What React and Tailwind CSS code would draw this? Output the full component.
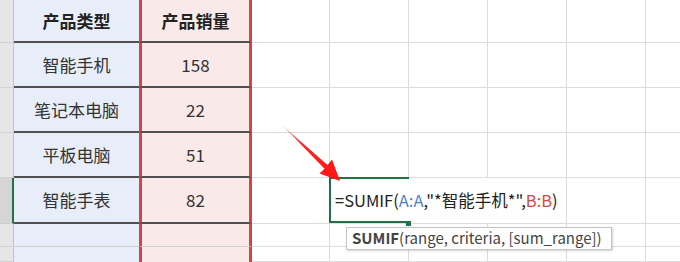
export default function App() {
  const rows = [
    { type: "产品类型", sales: "产品销量", head: true },
    { type: "智能手机", sales: "158" },
    { type: "笔记本电脑", sales: "22" },
    { type: "平板电脑", sales: "51" },
    { type: "智能手表", sales: "82" },
    { type: "", sales: "" },
    { type: "", sales: "" },
  ];

  const grid = "border-r border-b border-[#dcdcdc]";

  return (
    <div className="relative w-[680px] h-[262px] overflow-hidden bg-white font-['Noto_Sans_CJK_SC',sans-serif]">
      <div className="grid h-full grid-cols-[14px_125px_113px_78px_79px_79px_79px_79px_1fr] grid-rows-[43px_45px_45px_45px_46px_23px_1fr]">
        {rows.map((row, r) => {
          const dark = r <= 4;
          const line = dark
            ? "border-b-2 border-b-[#505050]"
            : r === 5
            ? "border-b border-b-[#cfcfcf]"
            : "";
          const weight = row.head ? "font-bold text-[#222]" : "text-[#333]";
          return [
            <div
              key={"h" + r}
              className={
                r === 4
                  ? "bg-[#d5d5d5] border-b border-[#cdcdcd] border-r-2 border-r-[#217346]"
                  : "bg-[#e6e6e6] border-b border-[#d2d2d2] border-r border-r-[#c2c2c2]"
              }
            />,
            <div
              key={"a" + r}
              className={`flex items-center justify-center bg-[#e8eef9] text-[17px] ${line} ${weight}`}
            >
              {row.type}
            </div>,
            <div
              key={"b" + r}
              className={`flex items-center justify-center bg-[#f9e9e9] border-x-[3px] border-x-[#d3434b] text-[17px] ${line} ${weight}`}
            >
              {row.sales}
            </div>,
            <div key={"c" + r} className={grid} />,
            r === 4 ? (
              <div key={"d" + r} className="relative border-b border-[#dcdcdc]">
                <div className="absolute -left-px -top-px right-0 bottom-0 border-l-2 border-y-2 border-[#217346]" />
                <div className="absolute right-[-2px] bottom-[-3px] w-[5px] h-[5px] bg-[#217346]" />
                <div className="absolute left-[5px] top-0 bottom-0 flex items-center whitespace-nowrap text-[16.5px] text-[#222]">
                  =SUMIF(<span className="text-[#4f7fd0]">A:A</span>,"*智能手机*",
                  <span className="text-[#d24b4b]">B:B</span>)
                </div>
              </div>
            ) : (
              <div key={"d" + r} className={grid} />
            ),
            <div
              key={"e" + r}
              className={r === 4 ? "border-b border-[#dcdcdc]" : grid}
            />,
            <div key={"f" + r} className={grid} />,
            <div key={"g" + r} className={grid} />,
            <div key={"i" + r} className="border-b border-[#dcdcdc]" />,
          ];
        })}
      </div>

      <div className="absolute left-[346px] top-[227px] w-[266px] h-[23px] flex items-center px-[5px] bg-white border border-[#c4c4c4] shadow-[1px_1px_2px_rgba(0,0,0,0.18)] text-[15px] text-[#444] whitespace-nowrap">
        <span className="font-bold">SUMIF</span>(range, criteria, [sum_range])
      </div>

      <svg className="absolute left-0 top-0 pointer-events-none" width="680" height="262">
        <defs>
          <linearGradient id="arrowFade" x1="282" y1="125" x2="340" y2="181" gradientUnits="userSpaceOnUse">
            <stop offset="0" stopColor="#ff4a4a" stopOpacity="0.35" />
            <stop offset="0.35" stopColor="#ff2424" />
            <stop offset="1" stopColor="#ff1414" />
          </linearGradient>
        </defs>
        <polygon
          points="282,125 327.5,165 332,159.5 340,181 319.5,173.5 324.5,168.8"
          fill="url(#arrowFade)"
        />
      </svg>
    </div>
  );
}
